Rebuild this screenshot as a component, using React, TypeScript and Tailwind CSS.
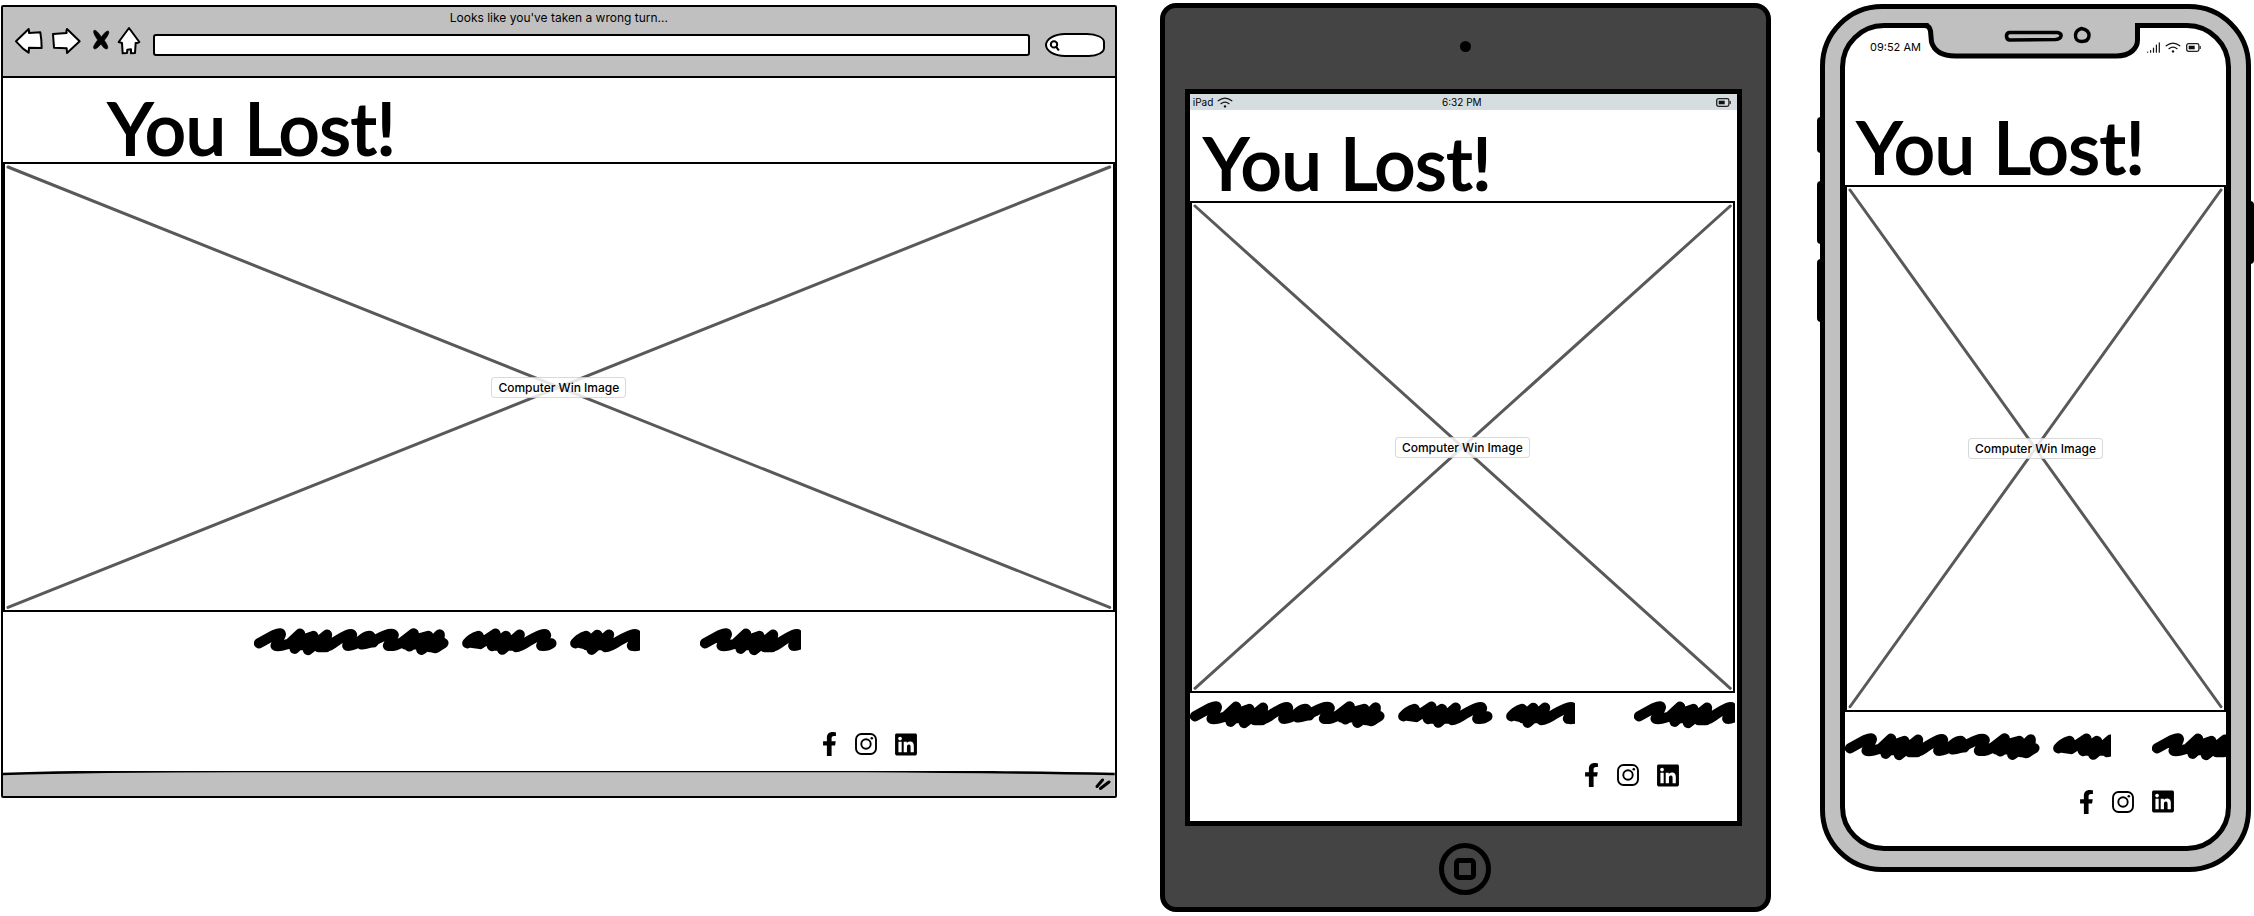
import { FaFacebookF, FaLinkedin } from "react-icons/fa";

const pressable = "block shrink-0 cursor-pointer";

function Heading({ className }: { className: string }) {
  return (
    <h1 className={`whitespace-nowrap font-['Lato','Liberation_Sans',sans-serif] text-[72px] leading-[66px] text-black [-webkit-text-stroke:2px_#000] ${className}`}>
      You Lost!
    </h1>
  );
}

function ImagePlaceholder({ className }: { className: string }) {
  return (
    <div className={`relative flex items-center justify-center border-2 border-black bg-white ${className}`}>
      <svg className="absolute inset-[3px] h-[calc(100%-6px)] w-[calc(100%-6px)] overflow-visible" viewBox="0 0 100 100" preserveAspectRatio="none" aria-hidden="true">
        <path d="M0 0L100 100M100 0L0 100" stroke="#595959" strokeWidth="3" strokeLinecap="round" vectorEffect="non-scaling-stroke" />
      </svg>
      <span className="relative whitespace-nowrap rounded border border-black/15 bg-white/85 px-1.5 text-xs font-medium leading-[19px] text-black">
        Computer Win Image
      </span>
    </div>
  );
}

function Scribble({ width }: { width: number }) {
  return (
    <svg className="block h-[29px] shrink-0" style={{ width }} viewBox={`12 24 ${width * 3} 87`} aria-hidden="true">
      <g fill="none" stroke="#000" strokeWidth="31" strokeLinecap="round" strokeLinejoin="round">
        <path d="M27 73L72 48Q98 38 91 50L77 80Q86 84 118 74L150 44L134 89L160 62L190 51L174 93L205 68L231 47L224 82Q236 84 256 68Q302 38 306 48L292 80Q312 82 340 58Q356 48 361 52L334 76Q350 78 386 58Q426 38 431 48L414 80Q430 84 456 70L491 43L478 82L502 60L535 51L514 92L545 70L569 46L568 66L580 72L556 87L530 78" />
        <path d="M132 78H236M152 66H234M206 84H228M326 70H370M466 76H566M486 62H566M540 84H560" />
        <path d="M652 73Q664 58 686 51L668 72L690 75L736 44L726 81L768 51L757 92L809 47L798 84Q810 84 836 66Q884 38 888 49L874 80Q890 83 904 73M676 66H810M730 80H796" />
        <path d="M976 73Q988 58 1009 51L990 72L1010 76L1042 48L1025 92L1077 47L1066 84Q1080 84 1106 66Q1156 38 1160 49L1146 80Q1160 83 1176 76M1000 66H1078M1010 78H1066" />
      </g>
    </svg>
  );
}

function SocialLinks({ className }: { className: string }) {
  return (
    <nav aria-label="Social" className={`flex h-6 items-center justify-end gap-[18px] text-black ${className}`}>
      <a href="#facebook" aria-label="Facebook">
        <FaFacebookF className="h-6 w-[15px]" />
      </a>
      <a href="#instagram" aria-label="Instagram">
        <svg className="block size-[22px]" viewBox="0 0 22 22" fill="none" stroke="currentColor" strokeWidth="1.9">
          <rect x="1" y="1" width="20" height="20" rx="5.5" />
          <circle cx="11" cy="11" r="4.7" />
          <circle cx="16.8" cy="5.2" r="1.3" fill="currentColor" stroke="none" />
        </svg>
      </a>
      <a href="#linkedin" aria-label="LinkedIn">
        <FaLinkedin className="h-[25px] w-[22px]" />
      </a>
    </nav>
  );
}

function Wifi() {
  return (
    <svg className="block h-[11px] w-4 shrink-0" viewBox="0 0 16 11" fill="none" stroke="#111" strokeWidth="1.2" strokeLinecap="round" aria-hidden="true">
      <path d="M1.2 3.8Q8 -1.6 14.8 3.8M4 6.7Q8 3.4 12 6.7" />
      <circle cx="8" cy="9.4" r="1.2" fill="#111" stroke="none" />
    </svg>
  );
}

function Battery() {
  return (
    <svg className="block h-[9px] w-[15px] shrink-0" viewBox="0 0 15 9" aria-hidden="true">
      <rect x=".7" y=".7" width="12.2" height="7.6" rx="1.8" fill="none" stroke="#222" strokeWidth="1.3" />
      <rect x="2.7" y="2.7" width="6" height="3.6" fill="#111" />
      <path d="M14.2 3v3" stroke="#222" strokeWidth="1.2" />
    </svg>
  );
}

function BrowserWindow() {
  const icon = "block h-9 overflow-visible";
  return (
    <section aria-label="Browser" className="mt-0.5 rounded-[2px] border-2 border-black bg-white">
      <header className="border-b-2 border-black bg-[#c0c0c0] pt-[3px]">
        <p className="text-center text-xs leading-4 text-black">Looks like you've taken a wrong turn...</p>
        <div className="mt-px flex h-9 items-center gap-1.5 px-2.5">
          <button className={pressable} aria-label="Back">
            <svg className={`${icon} w-[31px]`} viewBox="42 81 93 108" fill="#fff" stroke="#000" strokeWidth="6" strokeLinejoin="round">
              <path d="M51 124L89 87Q91 92 90 99L124 97Q128 120 128 144L90 143L89 158L72 146Z" />
            </svg>
          </button>
          <button className={pressable} aria-label="Forward">
            <svg className={`${icon} w-8`} viewBox="153 81 96 108" fill="#fff" stroke="#000" strokeWidth="6" strokeLinejoin="round">
              <path d="M242 124L204 87Q201 92 203 99L162 102L165 143L203 145L204 159Z" />
            </svg>
          </button>
          <button className={pressable} aria-label="Stop">
            <svg className={`${icon} w-6`} viewBox="267 81 72 108">
              <path d="M285 91Q292 88 307 111Q321 91 328 93Q334 98 316 121Q330 141 325 146Q317 150 306 132Q291 150 285 146Q279 142 296 120Q280 97 285 91Z" stroke="#000" strokeWidth="2" />
            </svg>
          </button>
          <button className={pressable} aria-label="Home">
            <svg className={`${icon} w-[22px]`} viewBox="357 81 66 108" fill="#fff" stroke="#000" strokeWidth="6" strokeLinejoin="round">
              <path d="M390 84L421 126Q416 130 410 129L408 159L396 160V148L385 149L384 159L371 160L369 129L359 126Z" />
            </svg>
          </button>
          <input aria-label="Address" className="ml-[7px] h-[22px] min-w-0 flex-1 rounded-[3px] border-2 border-black bg-white px-2 text-xs outline-none" />
          <label className="ml-[9px] flex h-6 w-[60px] shrink-0 items-center overflow-hidden rounded-[20px_18px_16px_20px/12px_9px_9px_12px] border-2 border-black bg-white pl-0.5">
            <svg className="block size-[11px] shrink-0" viewBox="0 0 11 11" fill="none" stroke="#000" strokeWidth="2" strokeLinecap="round" aria-hidden="true">
              <circle cx="5" cy="4.4" r="3.2" />
              <path d="M7.2 6.8L9.4 9.8" />
            </svg>
            <input aria-label="Search" className="min-w-0 flex-1 bg-transparent text-xs outline-none" />
          </label>
        </div>
        <div className="h-[13px]" />
      </header>
      <Heading className="pb-0.5 pl-[105px] pt-4" />
      <ImagePlaceholder className="aspect-[1113/451]" />
      <div className="mt-[15px] flex gap-[60px] pl-[251px]">
        <Scribble width={386} />
        <Scribble width={101} />
      </div>
      <SocialLinks className="mt-[76px] pr-[198px]" />
      <footer className="relative mt-[15px] flex h-[25px] items-center justify-end pr-1">
        <svg className="absolute inset-0 size-full" viewBox="0 0 1111 25" preserveAspectRatio="none" aria-hidden="true">
          <path d="M0 3Q90 0 240 0H860Q1000 1 1111 3V25H0Z" fill="#c0c0c0" />
          <path d="M0 3Q90 0 240 0H860Q1000 1 1111 3" fill="none" stroke="#000" strokeWidth="2.4" vectorEffect="non-scaling-stroke" />
        </svg>
        <svg className="relative block h-3 w-4" viewBox="0 0 16 12" stroke="#000" strokeWidth="3" strokeLinecap="round" aria-hidden="true">
          <path d="M2 8.5L7.5 2M5.5 10.5L14 4" fill="none" />
        </svg>
      </footer>
    </section>
  );
}

function Tablet() {
  return (
    <section aria-label="Tablet" className="flex flex-col items-center rounded-[16px] border-[5px] border-black bg-[#444] px-5">
      <div className="mt-[33px] size-[11px] rounded-full bg-black" />
      <div className="mt-[37px] w-[calc(100%-4px)] self-start overflow-hidden border-[5px] border-black bg-white pb-[34px]">
        <div className="grid h-4 grid-cols-3 items-center bg-[#d6dde0] pl-[3px] pr-1.5 text-[10px] leading-4 text-black">
          <span className="flex items-center gap-1">
            iPad
            <Wifi />
          </span>
          <span className="text-center">6:32 PM</span>
          <span className="flex justify-end">
            <Battery />
          </span>
        </div>
        <Heading className="pb-1.5 pl-3.5 pt-[19px]" />
        <ImagePlaceholder className="mr-0.5 aspect-[546/493]" />
        <div className="mr-0.5 mt-[7px] flex gap-[59px] overflow-hidden">
          <Scribble width={385} />
          <Scribble width={102} />
        </div>
        <SocialLinks className="mt-[34px] pr-[58px]" />
      </div>
      <button aria-label="Home button" className="mb-3 mt-[17px] flex size-[52px] cursor-pointer items-center justify-center rounded-full border-[5px] border-black">
        <span className="block size-[22px] rounded-[5px] border-[5px] border-black" />
      </button>
    </section>
  );
}

function Phone() {
  return (
    <section aria-label="Phone" className="relative mt-px pl-1.5 pr-[3px]">
      <div className="absolute left-[3px] top-[113px] flex w-2 flex-col">
        <span className="h-9 rounded-l bg-black" />
        <span className="mt-7 h-[63px] rounded-l bg-black" />
        <span className="mt-[15px] h-[63px] rounded-l bg-black" />
      </div>
      <span className="absolute right-0 top-[197px] h-[63px] w-2 rounded-r bg-black" />
      <div className="relative rounded-[62px] border-[5px] border-black bg-[#c0c0c0] px-[15px] pb-4 pt-3.5">
        <div className="relative">
          <div className="overflow-hidden rounded-[44px] border-[5px] border-black bg-white pb-8">
            <div className="flex h-[38px] items-center justify-between px-[25px] text-[11px] leading-4 text-black">
              <span>09:52 AM</span>
              <span className="flex items-center gap-[5px]">
                <svg className="block h-[11px] w-[13px]" viewBox="0 0 13 11" stroke="#111" strokeWidth="1.2" strokeLinecap="round" aria-hidden="true">
                  <path d="M.7 10v.2M3.6 8.5v1.7M6.5 6v4.2M9.4 3v7.2M12.3 .8v9.4" />
                </svg>
                <Wifi />
                <Battery />
              </span>
            </div>
            <Heading className="pb-1.5 pl-3 pt-[47px]" />
            <ImagePlaceholder className="aspect-[379/524]" />
            <div className="mt-5 flex gap-[41px] overflow-hidden">
              <Scribble width={266} />
              <Scribble width={74} />
            </div>
            <SocialLinks className="mt-[29px] pr-[52px]" />
          </div>
          <svg className="absolute left-1/2 top-0 h-9 w-[223px] -translate-x-1/2" viewBox="0 0 223 36" fill="none" aria-hidden="true">
            <path d="M5 0L8 19C11 29 20 33 32 33H193C207 33 214 25 214 17V0Z" fill="#c0c0c0" />
            <g stroke="#000">
              <path d="M0 2.5Q6 2 7 8L8 19C11 29 20 33 32 33H193C207 33 214 25 214 17V2.5H220" strokeWidth="5" />
              <path d="M86 9.5H134Q138 10.5 137.5 13Q137 16 132 16.5L86 17Q83 16.5 83 13Q83 10 86 9.5Z" strokeWidth="3.6" strokeLinejoin="round" />
              <path d="M158 5.5Q166 7 165.5 13Q165 18.5 158 18.5Q151.5 18 152 12Q152.5 7 158 5.5Z" strokeWidth="3.4" />
            </g>
          </svg>
        </div>
      </div>
    </section>
  );
}

export default function App() {
  return (
    <main className="grid grid-cols-[1117fr_612fr_438fr] items-start gap-x-[43px] bg-white pl-px pt-[3px] font-['Inter','Liberation_Sans',sans-serif]">
      <BrowserWindow />
      <Tablet />
      <Phone />
    </main>
  );
}
